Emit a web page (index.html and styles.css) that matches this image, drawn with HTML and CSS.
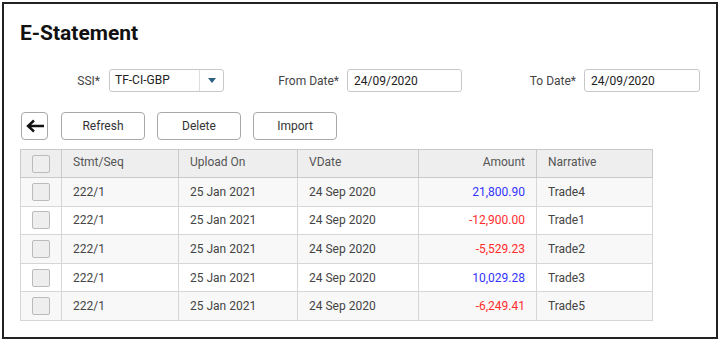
FILE: index.html
```html
<!DOCTYPE html>
<html lang="en">
<head>
  <meta charset="UTF-8">
  <title>E-Statement</title>
  <link rel="stylesheet" href="styles.css">
</head>
<body>
  <div class="panel">
    <h1 class="title">E-Statement</h1>

    <div class="filters">
      <div class="field field-ssi">
        <label class="field-label">SSI*</label>
        <div class="select">
          <span class="select-value">TF-CI-GBP</span>
          <span class="select-toggle">
            <svg width="8" height="5" viewBox="0 0 8 5"><path d="M0 0h8L4 5z" fill="#2c5f80"/></svg>
          </span>
        </div>
      </div>
      <div class="field field-from">
        <label class="field-label">From Date*</label>
        <input class="text-input" type="text" value="24/09/2020">
      </div>
      <div class="field field-to">
        <label class="field-label">To Date*</label>
        <input class="text-input wide" type="text" value="24/09/2020">
      </div>
    </div>

    <div class="toolbar">
      <button class="btn icon-btn" title="Back">
        <svg width="20" height="14" viewBox="0 0 20 14"><path d="M19 7H3M9 1.5L3 7l6 5.5" fill="none" stroke="#111" stroke-width="2.4"/></svg>
      </button>
      <button class="btn">Refresh</button>
      <button class="btn">Delete</button>
      <button class="btn">Import</button>
    </div>

    <table class="grid">
      <colgroup>
        <col style="width:41px">
        <col style="width:117px">
        <col style="width:119px">
        <col style="width:121px">
        <col style="width:118px">
        <col style="width:116px">
      </colgroup>
      <thead>
        <tr>
          <th class="check-cell"><span class="check"></span></th>
          <th>Stmt/Seq</th>
          <th>Upload On</th>
          <th>VDate</th>
          <th class="num">Amount</th>
          <th>Narrative</th>
        </tr>
      </thead>
      <tbody>
        <tr>
          <td class="check-cell"><span class="check"></span></td>
          <td>222/1</td><td>25 Jan 2021</td><td>24 Sep 2020</td>
          <td class="num credit">21,800.90</td><td>Trade4</td>
        </tr>
        <tr>
          <td class="check-cell"><span class="check"></span></td>
          <td>222/1</td><td>25 Jan 2021</td><td>24 Sep 2020</td>
          <td class="num debit">-12,900.00</td><td>Trade1</td>
        </tr>
        <tr>
          <td class="check-cell"><span class="check"></span></td>
          <td>222/1</td><td>25 Jan 2021</td><td>24 Sep 2020</td>
          <td class="num debit">-5,529.23</td><td>Trade2</td>
        </tr>
        <tr>
          <td class="check-cell"><span class="check"></span></td>
          <td>222/1</td><td>25 Jan 2021</td><td>24 Sep 2020</td>
          <td class="num credit">10,029.28</td><td>Trade3</td>
        </tr>
        <tr>
          <td class="check-cell"><span class="check"></span></td>
          <td>222/1</td><td>25 Jan 2021</td><td>24 Sep 2020</td>
          <td class="num debit">-6,249.41</td><td>Trade5</td>
        </tr>
      </tbody>
    </table>
  </div>
</body>
</html>
```

FILE: styles.css
```css
* {
  box-sizing: border-box;
}

body {
  margin: 0;
  padding: 2px;
  font-family: Roboto, "Liberation Sans", Arial, sans-serif;
  font-size: 12px;
  color: #333;
  background: #fff;
}

.panel {
  width: 716px;
  height: 337px;
  border: 2px solid #222;
  padding: 16px 16px 0 16px;
}

.title {
  margin: 0;
  font-size: 21px;
  line-height: 26px;
  font-weight: 700;
  color: #111;
}

/* filter row */
.filters {
  display: flex;
  align-items: center;
  margin-top: 23px;
  height: 23px;
}

.field {
  display: flex;
  align-items: center;
}

.field-label {
  text-align: right;
  color: #444;
  width: 70px;
  margin-right: 8px;
}

.field-ssi .field-label {
  width: 80px;
  margin-right: 9px;
}

.field-from {
  margin-left: 45px;
}

.field-to {
  margin-left: 44px;
}

.select {
  display: flex;
  width: 115px;
  height: 23px;
  border: 1px solid #c8c8c8;
  border-radius: 3px;
  background: #fff;
}

.select-value {
  flex: 1;
  padding-left: 5px;
  line-height: 21px;
  color: #222;
}

.select-toggle {
  width: 24px;
  border-left: 1px solid #ddd;
  display: flex;
  align-items: center;
  justify-content: center;
}

.text-input {
  width: 115px;
  height: 23px;
  border: 1px solid #c8c8c8;
  border-radius: 3px;
  padding: 0 6px;
  font: inherit;
  color: #222;
}

.text-input.wide {
  width: 116px;
}

/* toolbar */
.toolbar {
  display: flex;
  margin-top: 20px;
  height: 28px;
}

.btn {
  width: 84px;
  height: 28px;
  margin-left: 12px;
  border: 1px solid #a8a8a8;
  border-radius: 4px;
  background: #fff;
  font: inherit;
  color: #333;
  padding: 0;
}

.icon-btn {
  width: 27px;
  margin-left: 1px;
  display: flex;
  align-items: center;
  justify-content: center;
}

.icon-btn + .btn {
  margin-left: 13px;
}

/* grid */
.grid {
  margin-top: 9px;
  width: 632px;
  border-collapse: collapse;
  table-layout: fixed;
  border: 1px solid #d2d2d2;
}

.grid th,
.grid td {
  border: 1px solid #d6d6d6;
  padding: 0 11px;
  text-align: left;
  font-weight: 400;
  white-space: nowrap;
}

.grid th {
  height: 28px;
  padding-bottom: 3px;
  background: #eee;
  color: #555;
  border-color: #cacaca;
}

.grid td {
  height: 28.6px;
  color: #444;
}

.grid tbody tr:nth-child(odd) {
  background: #f8f8f8;
}

.grid .num {
  text-align: right;
}

.grid .check-cell {
  padding: 0;
  text-align: center;
}

.check {
  display: inline-block;
  width: 18px;
  height: 18px;
  border: 1px solid #bbb;
  border-radius: 2px;
  background: #eee;
  vertical-align: middle;
}

.grid .credit {
  color: #3434ff;
}

.grid .debit {
  color: #ff2c2c;
}
```
